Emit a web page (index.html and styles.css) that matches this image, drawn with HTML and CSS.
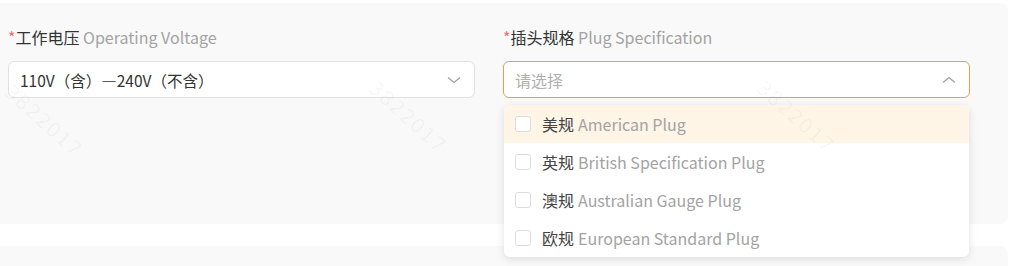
FILE: index.html
```html
<!DOCTYPE html>
<html lang="zh-CN">
<head>
    <meta charset="utf-8">
    <title>Plug Specification</title>
    <link rel="stylesheet" href="styles.css">
</head>
<body>
    <div class="panel">
        <div class="form">
            <div class="field">
                <div class="label"><span class="req">*</span>工作电压 <span class="en">Operating Voltage</span></div>
                <div class="select">
                    <span class="value">110V（含）—240V（不含）</span>
                    <svg class="arrow" width="14" height="8" viewBox="0 0 14 8"><path d="M1 1.5 L7 6.5 L13 1.5" fill="none" stroke="#a0a0a0" stroke-width="1.3"/></svg>
                </div>
            </div>
            <div class="field">
                <div class="label"><span class="req">*</span>插头规格 <span class="en">Plug Specification</span></div>
                <div class="select open">
                    <span class="placeholder">请选择</span>
                    <svg class="arrow" width="14" height="8" viewBox="0 0 14 8"><path d="M1 6.5 L7 1.5 L13 6.5" fill="none" stroke="#a0a0a0" stroke-width="1.3"/></svg>
                </div>
                <div class="menu">
                    <div class="option hover"><span class="check"></span>美规 <span class="en">American Plug</span></div>
                    <div class="option"><span class="check"></span>英规 <span class="en">British Specification Plug</span></div>
                    <div class="option"><span class="check"></span>澳规 <span class="en">Australian Gauge Plug</span></div>
                    <div class="option"><span class="check"></span>欧规 <span class="en">European Standard Plug</span></div>
                </div>
            </div>
        </div>
    </div>
    <div class="panel next"></div>

    <!-- watermark -->
    <div class="wm" style="left: 16px; top: 80px;">3822017</div>
    <div class="wm" style="left: 380px; top: 76px;">3822017</div>
    <div class="wm" style="left: 768px; top: 76px;">3822017</div>
</body>
</html>
```

FILE: styles.css
```css
body{
    margin: 0;
    background-color: #ffffff;
    font-family: "Noto Sans CJK SC", "Noto Sans", sans-serif;
    font-size: 16px;
    color: #333333;
    overflow: hidden;
}
.panel{
    margin-top: 3px;
    width: 1008px;
    height: 221px;
    background-color: #f9f9f9;
    border-radius: 0 8px 8px 0;
}
.panel.next{
    margin-top: 22px;
    height: 20px;
    border-radius: 0 8px 0 0;
}
.form{
    display: grid;
    grid-template-columns: 467px 467px;
    column-gap: 28px;
    padding: 23px 0 0 8px;
}
.field{
    position: relative;
}
.label{
    height: 23px;
    line-height: 23px;
    font-size: 16px;
    color: #333333;
}
.req{
    color: #f56c6c;
}
.en{
    color: #a3a3a3;
}
.select{
    margin-top: 12px;
    height: 35px;
    border: 1px solid #e2e2e2;
    border-radius: 6px;
    background-color: #ffffff;
    display: flex;
    align-items: center;
    justify-content: space-between;
    padding: 0 13px 0 11px;
}
.select.open{
    border-color: #f39a4a;
}
.value{
    font-size: 15.5px;
    color: #333333;
}
.placeholder{
    font-size: 16px;
    color: #b0b0b0;
}
.menu{
    position: absolute;
    left: 1px;
    right: 1px;
    top: 79px;
    background-color: #ffffff;
    border-radius: 6px;
    box-shadow: 0 2px 8px rgba(0, 0, 0, 0.12);
    overflow: hidden;
    z-index: 2;
}
.option{
    height: 38px;
    display: flex;
    align-items: center;
    padding-left: 11px;
    font-size: 16px;
    color: #444444;
}
.option.hover{
    background-color: #fef5e7;
}
.check{
    width: 14px;
    height: 14px;
    border: 1px solid #dddddd;
    border-radius: 3px;
    background-color: #ffffff;
    margin-right: 11px;
}
.option .en{
    margin-left: 4px;
}
.wm{
    position: absolute;
    font-family: "DejaVu Sans", sans-serif;
    font-size: 20px;
    letter-spacing: 1px;
    color: rgba(0, 0, 0, 0.04);
    transform: rotate(42deg);
    transform-origin: left top;
    pointer-events: none;
    z-index: 3;
}
```
